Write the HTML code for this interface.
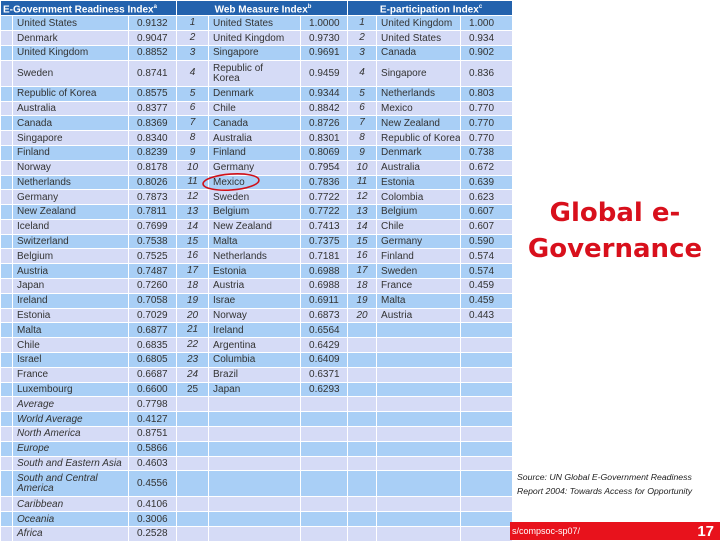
<!DOCTYPE html>
<html><head><meta charset="utf-8"><style>
body{margin:0;width:720px;height:540px;background:#fff;position:relative;overflow:hidden;font-family:"Liberation Sans",sans-serif}
table{position:absolute;left:0;top:0;border-collapse:collapse;table-layout:fixed;width:512px;font-size:10px;color:#333}
td{border:1px solid #fff;padding:1px 0 0 4px;height:12.8px;line-height:10px;white-space:nowrap;overflow:hidden;vertical-align:middle}
td.s{padding-left:8px}
tr.h td{background:#2362ad;color:#fff;font-weight:bold;height:13px;font-size:10px;padding-left:2px}
tr.b td{background:#a9cff6}
tr.l td{background:#d5dbf6}
tr.d td{height:24px;white-space:normal}
td.r{font-style:italic;text-align:center;padding:0}
td.i{font-style:italic}
sup{font-size:6px}
.t{position:absolute;color:#d8101c;font-family:"DejaVu Sans",sans-serif;font-weight:bold;font-size:26px;width:210px;left:510px;text-align:center;line-height:36px}
.src{position:absolute;left:517px;font-size:8.7px;font-style:italic;color:#222}
.bar{position:absolute;left:510px;top:522px;width:210px;height:18px;background:#e8121c;color:#fff;font-size:9px}
</style></head><body>
<table>
<colgroup><col style="width:12px"><col style="width:116px"><col style="width:48px"><col style="width:32px"><col style="width:92px"><col style="width:47px"><col style="width:29px"><col style="width:84px"><col style="width:52px"></colgroup>
<tr class="h"><td colspan="3">E-Government Readiness Index<sup>a</sup></td><td colspan="3" style="text-align:center">Web Measure Index<sup>b</sup></td><td colspan="3" style="text-align:center">E-participation Index<sup>c</sup></td></tr>
<tr class="b"><td></td><td>United States</td><td class="s">0.9132</td><td class="r">1</td><td>United States</td><td class="s">1.0000</td><td class="r">1</td><td>United Kingdom</td><td class="s">1.000</td></tr>
<tr class="l"><td></td><td>Denmark</td><td class="s">0.9047</td><td class="r">2</td><td>United Kingdom</td><td class="s">0.9730</td><td class="r">2</td><td>United States</td><td class="s">0.934</td></tr>
<tr class="b"><td></td><td>United Kingdom</td><td class="s">0.8852</td><td class="r">3</td><td>Singapore</td><td class="s">0.9691</td><td class="r">3</td><td>Canada</td><td class="s">0.902</td></tr>
<tr class="l d"><td></td><td>Sweden</td><td class="s">0.8741</td><td class="r">4</td><td>Republic of<br>Korea</td><td class="s">0.9459</td><td class="r">4</td><td>Singapore</td><td class="s">0.836</td></tr>
<tr class="b"><td></td><td>Republic of Korea</td><td class="s">0.8575</td><td class="r">5</td><td>Denmark</td><td class="s">0.9344</td><td class="r">5</td><td>Netherlands</td><td class="s">0.803</td></tr>
<tr class="l"><td></td><td>Australia</td><td class="s">0.8377</td><td class="r">6</td><td>Chile</td><td class="s">0.8842</td><td class="r">6</td><td>Mexico</td><td class="s">0.770</td></tr>
<tr class="b"><td></td><td>Canada</td><td class="s">0.8369</td><td class="r">7</td><td>Canada</td><td class="s">0.8726</td><td class="r">7</td><td>New Zealand</td><td class="s">0.770</td></tr>
<tr class="l"><td></td><td>Singapore</td><td class="s">0.8340</td><td class="r">8</td><td>Australia</td><td class="s">0.8301</td><td class="r">8</td><td>Republic of Korea</td><td class="s">0.770</td></tr>
<tr class="b"><td></td><td>Finland</td><td class="s">0.8239</td><td class="r">9</td><td>Finland</td><td class="s">0.8069</td><td class="r">9</td><td>Denmark</td><td class="s">0.738</td></tr>
<tr class="l"><td></td><td>Norway</td><td class="s">0.8178</td><td class="r">10</td><td>Germany</td><td class="s">0.7954</td><td class="r">10</td><td>Australia</td><td class="s">0.672</td></tr>
<tr class="b"><td></td><td>Netherlands</td><td class="s">0.8026</td><td class="r">11</td><td>Mexico</td><td class="s">0.7836</td><td class="r">11</td><td>Estonia</td><td class="s">0.639</td></tr>
<tr class="l"><td></td><td>Germany</td><td class="s">0.7873</td><td class="r">12</td><td>Sweden</td><td class="s">0.7722</td><td class="r">12</td><td>Colombia</td><td class="s">0.623</td></tr>
<tr class="b"><td></td><td>New Zealand</td><td class="s">0.7811</td><td class="r">13</td><td>Belgium</td><td class="s">0.7722</td><td class="r">13</td><td>Belgium</td><td class="s">0.607</td></tr>
<tr class="l"><td></td><td>Iceland</td><td class="s">0.7699</td><td class="r">14</td><td>New Zealand</td><td class="s">0.7413</td><td class="r">14</td><td>Chile</td><td class="s">0.607</td></tr>
<tr class="b"><td></td><td>Switzerland</td><td class="s">0.7538</td><td class="r">15</td><td>Malta</td><td class="s">0.7375</td><td class="r">15</td><td>Germany</td><td class="s">0.590</td></tr>
<tr class="l"><td></td><td>Belgium</td><td class="s">0.7525</td><td class="r">16</td><td>Netherlands</td><td class="s">0.7181</td><td class="r">16</td><td>Finland</td><td class="s">0.574</td></tr>
<tr class="b"><td></td><td>Austria</td><td class="s">0.7487</td><td class="r">17</td><td>Estonia</td><td class="s">0.6988</td><td class="r">17</td><td>Sweden</td><td class="s">0.574</td></tr>
<tr class="l"><td></td><td>Japan</td><td class="s">0.7260</td><td class="r">18</td><td>Austria</td><td class="s">0.6988</td><td class="r">18</td><td>France</td><td class="s">0.459</td></tr>
<tr class="b"><td></td><td>Ireland</td><td class="s">0.7058</td><td class="r">19</td><td>Israe</td><td class="s">0.6911</td><td class="r">19</td><td>Malta</td><td class="s">0.459</td></tr>
<tr class="l"><td></td><td>Estonia</td><td class="s">0.7029</td><td class="r">20</td><td>Norway</td><td class="s">0.6873</td><td class="r">20</td><td>Austria</td><td class="s">0.443</td></tr>
<tr class="b"><td></td><td>Malta</td><td class="s">0.6877</td><td class="r">21</td><td>Ireland</td><td class="s">0.6564</td><td></td><td></td><td></td></tr>
<tr class="l"><td></td><td>Chile</td><td class="s">0.6835</td><td class="r">22</td><td>Argentina</td><td class="s">0.6429</td><td></td><td></td><td></td></tr>
<tr class="b"><td></td><td>Israel</td><td class="s">0.6805</td><td class="r">23</td><td>Columbia</td><td class="s">0.6409</td><td></td><td></td><td></td></tr>
<tr class="l"><td></td><td>France</td><td class="s">0.6687</td><td class="r">24</td><td>Brazil</td><td class="s">0.6371</td><td></td><td></td><td></td></tr>
<tr class="b"><td></td><td>Luxembourg</td><td class="s">0.6600</td><td class="r" style="font-style:normal">25</td><td>Japan</td><td class="s">0.6293</td><td></td><td></td><td></td></tr>
<tr class="l"><td></td><td class="i">Average</td><td class="s">0.7798</td><td></td><td></td><td></td><td></td><td></td><td></td></tr>
<tr class="b"><td></td><td class="i">World Average</td><td class="s">0.4127</td><td></td><td></td><td></td><td></td><td></td><td></td></tr>
<tr class="l"><td></td><td class="i">North America</td><td class="s">0.8751</td><td></td><td></td><td></td><td></td><td></td><td></td></tr>
<tr class="b"><td></td><td class="i">Europe</td><td class="s">0.5866</td><td></td><td></td><td></td><td></td><td></td><td></td></tr>
<tr class="l"><td></td><td class="i">South and Eastern Asia</td><td class="s">0.4603</td><td></td><td></td><td></td><td></td><td></td><td></td></tr>
<tr class="b d"><td></td><td class="i">South and Central America</td><td class="s">0.4556</td><td></td><td></td><td></td><td></td><td></td><td></td></tr>
<tr class="l"><td></td><td class="i">Caribbean</td><td class="s">0.4106</td><td></td><td></td><td></td><td></td><td></td><td></td></tr>
<tr class="b"><td></td><td class="i">Oceania</td><td class="s">0.3006</td><td></td><td></td><td></td><td></td><td></td><td></td></tr>
<tr class="l"><td></td><td class="i">Africa</td><td class="s">0.2528</td><td></td><td></td><td></td><td></td><td></td><td></td></tr>
</table>
<svg style="position:absolute;left:0;top:0" width="720" height="540"><ellipse cx="231" cy="182" rx="28" ry="8" transform="rotate(-4 231 182)" fill="none" stroke="#d01018" stroke-width="1.6"/></svg>
<div class="t" style="top:195px">Global e-</div>
<div class="t" style="top:231px">Governance</div>
<div class="src" style="top:472px">Source: UN Global E-Government Readiness</div>
<div class="src" style="top:486px">Report 2004: Towards Access for Opportunity</div>
<div class="bar"><span style="position:absolute;left:2px;top:4px">s/compsoc-sp07/</span><span style="position:absolute;right:6px;top:1px;font-size:15px;font-weight:bold">17</span></div>
</body></html>
